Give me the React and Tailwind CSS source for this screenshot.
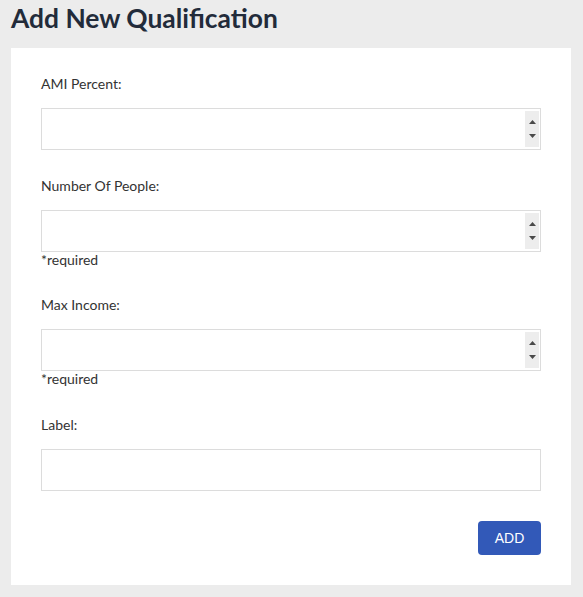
const fields = [
  { label: "AMI Percent:", number: true, required: false, gap: "mb-[26px]" },
  { label: "Number Of People:", number: true, required: true, gap: "mb-[27px]" },
  { label: "Max Income:", number: true, required: true, gap: "mb-[28px]" },
  { label: "Label:", number: false, required: false, gap: "" },
];

function Spinner() {
  return (
    <div className="pointer-events-none absolute right-[2px] top-[3px] bottom-[3px] w-[14px] bg-[#ededed] flex flex-col items-center justify-center gap-[10px]">
      <svg width="7" height="4" viewBox="0 0 7 4">
        <path d="M0 4 L3.5 0 L7 4 Z" fill="#4a4a4a" />
      </svg>
      <svg width="7" height="4" viewBox="0 0 7 4">
        <path d="M0 0 L7 0 L3.5 4 Z" fill="#4a4a4a" />
      </svg>
    </div>
  );
}

export default function App() {
  return (
    <div className="min-h-screen bg-[#ececec] pl-[11px] pr-[12px] pb-[12px] font-['Lato',sans-serif]">
      <h1 className="pt-[2px] text-[26.4px] leading-[32px] font-bold text-[#222b3a] mb-[14px]">
        Add New Qualification
      </h1>
      <div className="bg-white px-[30px] pt-[26px] pb-[30px]">
        {fields.map((f) => (
          <div key={f.label} className={f.gap}>
            <label className="block text-[14px] leading-[20px] text-[#333] mb-[14px]">
              {f.label}
            </label>
            <div className="relative">
              <input
                type={f.number ? "number" : "text"}
                className="block w-full h-[42px] border border-[#dcdcdc] bg-white px-3 text-[14px] text-[#333] outline-none [appearance:textfield] [&::-webkit-inner-spin-button]:appearance-none [&::-webkit-outer-spin-button]:appearance-none"
              />
              {f.number && <Spinner />}
            </div>
            {f.required && (
              <div className="text-[14px] leading-[16px] text-[#333]">*required</div>
            )}
          </div>
        ))}
        <div className="flex justify-end mt-[30px]">
          <button className="h-[34px] w-[63px] rounded-[4px] bg-[#3259b8] text-white text-[14px] font-medium font-['Liberation_Sans',Arial,sans-serif]">
            ADD
          </button>
        </div>
      </div>
    </div>
  );
}
